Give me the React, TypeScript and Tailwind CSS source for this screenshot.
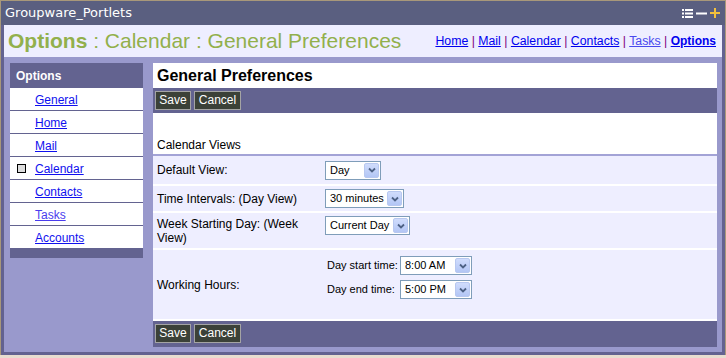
import React from "react";

const F = { fontFamily: '"Liberation Sans", Arial, sans-serif' };

function Btn({ label, w }: { label: string; w: string }) {
  return (
    <div
      className={`h-[19px] ${w} bg-[#3b4138] border border-[#a4a4a4] text-white text-[12px] leading-[17px] flex items-center justify-center`}
    >
      {label}
    </div>
  );
}

function Sel({ text, w }: { text: string; w: string }) {
  return (
    <div className={`h-[19px] ${w} border border-[#7f9db9] bg-white flex items-center justify-between`}>
      <span className="pl-[4px] text-[11px] text-black whitespace-nowrap">{text}</span>
      <div className="w-[15px] h-[15px] mr-[1px] rounded-[2px] border border-[#b8c8f0] bg-gradient-to-b from-[#d0dcfc] to-[#b3c6f5] flex items-center justify-center">
        <svg width="8" height="6" viewBox="0 0 8 6">
          <path d="M1 1.5 L4 4.5 L7 1.5" fill="none" stroke="#4d6185" strokeWidth="1.8" />
        </svg>
      </div>
    </div>
  );
}

export default function App() {
  const navItems = ["General", "Home", "Mail", "Calendar", "Contacts", "Tasks", "Accounts"];
  return (
    <div className="w-[726px] h-[358px] bg-[#e8ddd0]" style={F}>
      <div className="h-[355px] border-l border-t border-r border-[#a8987a] bg-[#636290] flex flex-col">
        {/* title bar */}
        <div className="h-[24px] bg-[#5a5f80] flex items-center justify-between pl-[4px] pr-[5px]">
          <span className="text-white text-[13px]" style={{ fontFamily: '"DejaVu Sans", Verdana, sans-serif' }}>
            Groupware_Portlets
          </span>
          <div className="flex items-center gap-[3px]">
            <svg width="11" height="9" viewBox="0 0 11 9">
              <rect x="0" y="0" width="2" height="2" fill="#fff" />
              <rect x="3" y="0" width="8" height="2" fill="#fff" />
              <rect x="0" y="3.5" width="2" height="2" fill="#fff" />
              <rect x="3" y="3.5" width="8" height="2" fill="#fff" />
              <rect x="0" y="7" width="2" height="2" fill="#fff" />
              <rect x="3" y="7" width="8" height="2" fill="#fff" />
            </svg>
            <svg width="11" height="9" viewBox="0 0 11 9">
              <rect x="0" y="3.5" width="11" height="2" fill="#fff" />
            </svg>
            <svg width="10" height="10" viewBox="0 0 10 10">
              <rect x="0" y="4" width="10" height="2" fill="#f2c03c" />
              <rect x="4" y="0" width="2" height="10" fill="#f2c03c" />
            </svg>
          </div>
        </div>
        <div className="flex-1 flex flex-col px-[3px] pb-[3px]">
          {/* header */}
          <div className="h-[32px] bg-[#eeeeff] flex items-center justify-between pl-[4px] pr-[6px]">
            <div className="text-[21px] text-[#92b04c] whitespace-nowrap">
              <span className="font-bold">Options</span> : Calendar : General Preferences
            </div>
            <div className="text-[12.3px] text-[#800080] whitespace-nowrap">
              <span className="text-[#0000ee] underline">Home</span> |{" "}
              <span className="text-[#0000ee] underline">Mail</span> |{" "}
              <span className="text-[#0000ee] underline">Calendar</span> |{" "}
              <span className="text-[#0000ee] underline">Contacts</span> |{" "}
              <span className="text-[#4848ee] underline">Tasks</span> |{" "}
              <span className="text-[#0000ee] underline font-bold text-[12px]">Options</span>
            </div>
          </div>
          {/* content */}
          <div className="flex-1 bg-[#9999cc] pl-[6px] pt-[6px] pr-[5px] pb-[5px] flex gap-[10px] items-start">
            {/* left nav */}
            <div className="w-[133px] flex flex-col">
              <div className="h-[25px] bg-[#636390] text-white font-bold text-[12px] flex items-center pl-[6px]">
                Options
              </div>
              {navItems.map((n) => (
                <div
                  key={n}
                  className="h-[23px] bg-white border-b border-[#636390] flex items-center relative pl-[25px] pt-[1px]"
                >
                  {n === "Calendar" && (
                    <div className="absolute left-[7px] top-[7px] w-[9px] h-[9px] border border-black bg-[#dddddd]" />
                  )}
                  <span className={`text-[12px] underline ${n === "Tasks" ? "text-[#4a3cee]" : "text-[#1010ee]"}`}>
                    {n}
                  </span>
                </div>
              ))}
              <div className="h-[9px] bg-[#636390]" />
            </div>
            {/* right panel */}
            <div className="flex-1 flex flex-col">
              <div className="h-[25px] bg-white flex items-center pl-[4px] text-[16px] font-bold text-black">
                General Preferences
              </div>
              <div className="h-[25px] bg-[#636390] flex items-start pt-[3px] pl-[2px] gap-[3px]">
                <Btn label="Save" w="w-[36px]" />
                <Btn label="Cancel" w="w-[47px]" />
              </div>
              <div className="h-[41px] bg-white flex items-end pl-[4px] pb-[0px] text-[12px] text-black">
                Calendar Views
              </div>
              <div className="h-[2px] bg-[#a3a3d6]" />
              {/* rows */}
              <div className="h-[28px] bg-[#eeeeff] flex items-center text-[12px] text-black">
                <div className="w-[172px] pl-[4px] pr-[8px]">Default View:</div>
                <Sel text="Day" w="w-[56px]" />
              </div>
              <div className="h-[2px] bg-white" />
              <div className="h-[25px] bg-[#eeeeff] flex items-center text-[12px] text-black">
                <div className="w-[172px] pl-[4px] pr-[8px]">Time Intervals: (Day View)</div>
                <Sel text="30 minutes" w="w-[79px]" />
              </div>
              <div className="h-[2px] bg-white" />
              <div className="h-[35px] bg-[#eeeeff] flex items-start text-[12px] text-black">
                <div className="w-[172px] pl-[4px] pr-[14px] self-center leading-[14px]">
                  Week Starting Day: (Week View)
                </div>
                <div className="mt-[3px]">
                  <Sel text="Current Day" w="w-[85px]" />
                </div>
              </div>
              <div className="h-[2px] bg-white" />
              <div className="h-[69px] bg-[#eeeeff] flex items-start text-[12px] text-black">
                <div className="w-[174px] pl-[4px] self-center">Working Hours:</div>
                <div className="mt-[6px] flex flex-col gap-[5px] text-[11px]">
                  <div className="flex items-center">
                    <div className="w-[73px]">Day start time:</div>
                    <Sel text="8:00 AM" w="w-[72px]" />
                  </div>
                  <div className="flex items-center">
                    <div className="w-[73px]">Day end time:</div>
                    <Sel text="5:00 PM" w="w-[72px]" />
                  </div>
                </div>
              </div>
              <div className="h-[2px] bg-white" />
              <div className="h-[26px] bg-[#636390] flex items-start pt-[3px] pl-[2px] gap-[3px]">
                <Btn label="Save" w="w-[36px]" />
                <Btn label="Cancel" w="w-[47px]" />
              </div>
            </div>
          </div>
        </div>
      </div>
    </div>
  );
}
